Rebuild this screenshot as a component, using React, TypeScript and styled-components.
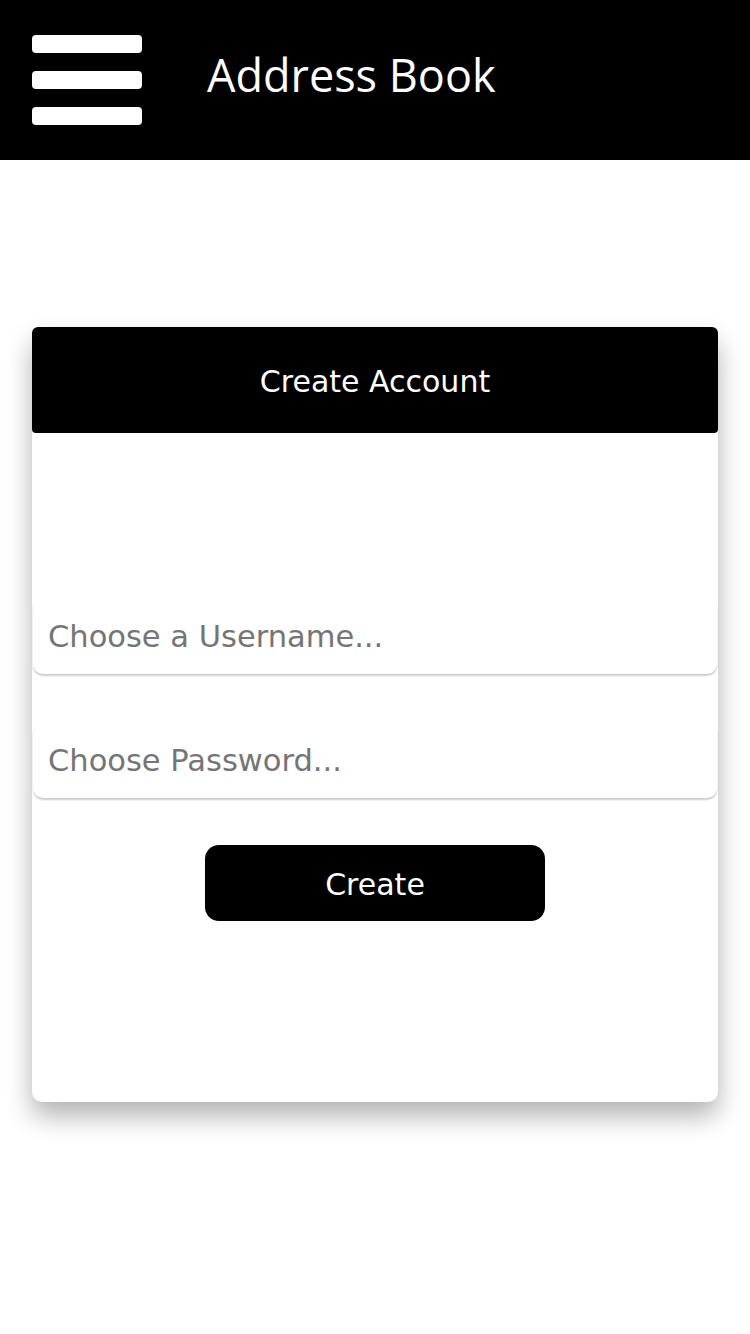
import React from "react";
import styled, { createGlobalStyle } from "styled-components";

const Global = createGlobalStyle`
  html, body { margin: 0; padding: 0; background: #fff; }
  body { font-family: "DejaVu Sans", Verdana, sans-serif; }
  * { box-sizing: border-box; }
`;

const Page = styled.div`
  min-height: 1334px;
  padding-bottom: 1px;
`;

const Header = styled.header`
  height: 160px;
  background: #000;
  display: flex;
  align-items: center;
  padding-left: 32px;
`;

const Burger = styled.div`
  width: 110px;
  display: flex;
  flex-direction: column;
  gap: 18px;
  margin-top: -1px;
`;

const Bar = styled.span`
  display: block;
  height: 18px;
  background: #fff;
  border-radius: 4px;
`;

const Title = styled.h1`
  margin: -12px 0 0 65px;
  color: #fff;
  font-family: "Open Sans", "Noto Sans", sans-serif;
  font-weight: 400;
  font-size: 45px;
  line-height: 1;
`;

const Card = styled.section`
  margin: 167px 32px 0;
  height: 775px;
  background: #fff;
  border-radius: 10px;
  box-shadow: 0 14px 26px rgba(0, 0, 0, 0.3);
  display: flex;
  flex-direction: column;
`;

const CardHead = styled.div`
  height: 106px;
  background: #000;
  border-radius: 6px 6px 4px 4px;
  color: #fff;
  display: flex;
  align-items: center;
  justify-content: center;
  font-size: 30px;
  padding-top: 2px;
`;

const Form = styled.form`
  display: flex;
  flex-direction: column;
  align-items: center;
  padding: 165px 1px 0;
  gap: 48px;
`;

const Input = styled.input`
  width: 100%;
  height: 76px;
  border: none;
  outline: none;
  border-radius: 10px;
  box-shadow: 0 2px 2px rgba(0, 0, 0, 0.2);
  padding: 0 15px;
  font-family: "DejaVu Sans", Verdana, sans-serif;
  font-size: 30.5px;
  color: #333;
  background: #fff;
  &::placeholder { color: #757575; }
`;

const Button = styled.button`
  width: 340px;
  height: 76px;
  margin-top: -1px;
  padding-top: 4px;
  background: #000;
  color: #fff;
  border: none;
  border-radius: 14px;
  font-family: "DejaVu Sans", Verdana, sans-serif;
  font-size: 30px;
`;

export default function App() {
  return (
    <Page>
      <Global />
      <Header>
        <Burger>
          <Bar />
          <Bar />
          <Bar />
        </Burger>
        <Title>Address Book</Title>
      </Header>
      <Card>
        <CardHead>Create Account</CardHead>
        <Form onSubmit={(e) => e.preventDefault()}>
          <Input type="text" placeholder="Choose a Username..." />
          <Input type="password" placeholder="Choose Password..." />
          <Button type="submit">Create</Button>
        </Form>
      </Card>
    </Page>
  );
}
